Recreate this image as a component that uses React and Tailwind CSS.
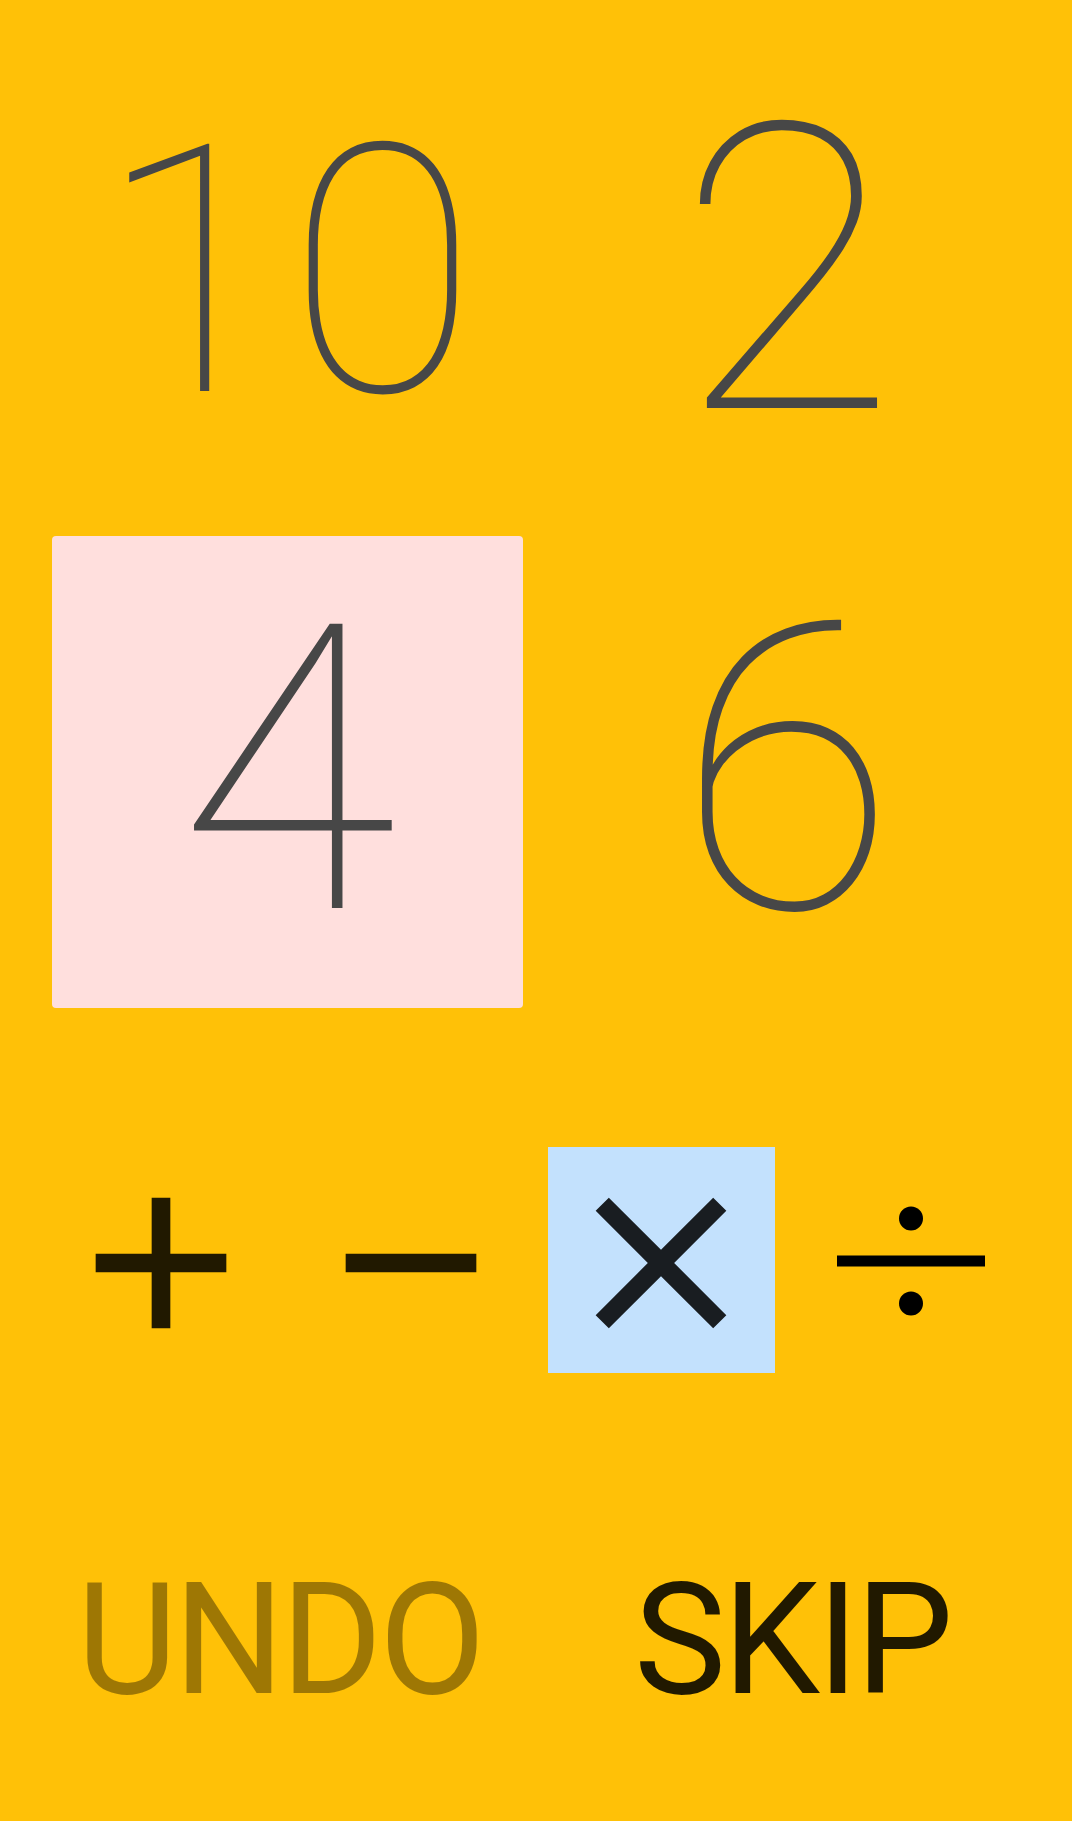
import React from "react";

function Digit({ value, size, selected }) {
  return (
    <div
      className={
        "flex items-center justify-center rounded-[4px] " +
        (selected ? "bg-[#ffdfdd]" : "")
      }
    >
      <span
        className={
          "font-[Roboto,sans-serif] font-thin leading-none text-[#474747] " +
          (size === "small" ? "text-[347px]" : "text-[400px]")
        }
      >
        {value}
      </span>
    </div>
  );
}

function Icon({ d }) {
  return (
    <svg width="224" height="224" viewBox="0 0 24 24" fill="currentColor" className="mt-[5px]">
      <path d={d} />
    </svg>
  );
}

export default function App() {
  return (
    <div className="w-[1072px] h-[1821px] bg-[#ffc107] flex flex-col font-[Roboto,sans-serif]">
      <div className="grid grid-cols-[471px_471px] grid-rows-[472px_472px] gap-[28px] pl-[52px] pt-[36px]">
        <Digit value="10" size="small" />
        <Digit value="2" />
        <Digit value="4" selected />
        <Digit value="6" />
      </div>

      <div className="flex pl-[36px] mt-[139px]">
        <div className="w-[250px] h-[226px] flex items-center justify-center text-black/[0.87]">
          <Icon d="M19 13h-6v6h-2v-6H5v-2h6V5h2v6h6v2z" />
        </div>
        <div className="w-[250px] h-[226px] flex items-center justify-center text-black/[0.87]">
          <Icon d="M19 13H5v-2h14v2z" />
        </div>
        <div className="w-[250px] h-[226px] flex items-center justify-center">
          <div className="w-[227px] h-[226px] bg-[#c3e1fd] flex items-center justify-center text-black/[0.87]">
            <Icon d="M19 6.41L17.59 5 12 10.59 6.41 5 5 6.41 10.59 12 5 17.59 6.41 19 12 13.41 17.59 19 19 17.59 13.41 12z" />
          </div>
        </div>
        <div className="w-[250px] h-[226px] flex items-center justify-center">
          <svg width="148" height="110" viewBox="0 0 148 110" className="text-black mt-[2px]">
            <circle cx="74" cy="12.5" r="12" fill="currentColor" />
            <rect x="0" y="49.5" width="148" height="11" fill="currentColor" />
            <circle cx="74" cy="97.5" r="12" fill="currentColor" />
          </svg>
        </div>
      </div>

      <div className="grid grid-cols-[471px_471px] gap-[28px] pl-[52px] mt-[190px]">
        <div className="flex justify-center pr-[16px]">
          <span className="text-[155px] leading-none font-normal tracking-[-3.5px] text-black/[0.38]">UNDO</span>
        </div>
        <div className="flex justify-center pl-[11px]">
          <span className="text-[155px] leading-none font-normal tracking-[-3.3px] text-black/[0.87]">SKIP</span>
        </div>
      </div>
    </div>
  );
}
